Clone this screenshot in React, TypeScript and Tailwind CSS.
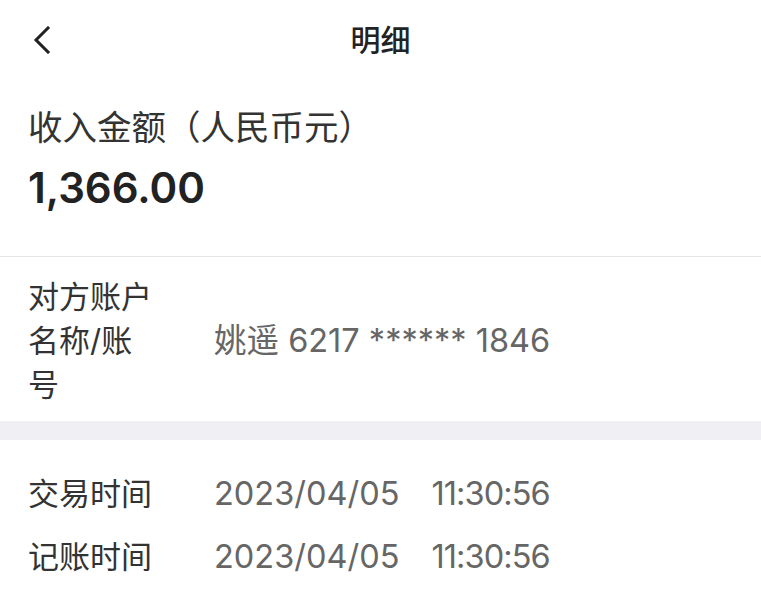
const font = { fontFamily: "Inter, 'Noto Sans CJK SC', sans-serif" };

function BackIcon() {
  return (
    <svg width="20" height="28" viewBox="0 0 20 28" fill="none">
      <path d="M16 2 L4 14 L16 26" stroke="#222" strokeWidth="3" strokeLinecap="square" />
    </svg>
  );
}

export default function App() {
  return (
    <div className="min-h-screen w-full bg-white font-['Inter','Noto_Sans_CJK_SC',sans-serif]" style={font}>
      <header className="relative flex h-[80px] items-center justify-center">
        <button className="absolute left-[32px] top-[26px]">
          <BackIcon />
        </button>
        <h1 className="text-[30px] font-medium text-[#222]">明细</h1>
      </header>

      <section className="border-b border-[#e6e6e6] px-[28px] pb-[40px] pt-[24px]">
        <p className="text-[34.5px] leading-[48px] text-[#333]">收入金额（人民币元）</p>
        <p className="mt-[8px] text-[42px] font-semibold leading-[56px] text-[#222]">1,366.00</p>
      </section>

      <section className="flex items-center px-[28px] pb-[14px] pt-[18px]">
        <div className="w-[186px] shrink-0">
          <p className="w-[128px] text-[31px] leading-[44px] text-[#333]">对方账户名称/账号</p>
        </div>
        <p className="text-[32.5px] leading-[44px] text-[#666]">姚遥 6217 ****** 1846</p>
      </section>

      <div className="h-[19px] bg-[#efeff4]" />

      <section className="px-[28px] pt-[23px]">
        {["交易时间", "记账时间"].map((label) => (
          <div key={label} className="flex h-[63px] items-center">
            <span className="w-[186px] shrink-0 text-[31px] text-[#333]">{label}</span>
            <span className="text-[32.5px] text-[#666]">2023/04/05</span>
            <span className="ml-[32px] text-[32.5px] tracking-[-0.9px] text-[#666]">11:30:56</span>
          </div>
        ))}
      </section>
    </div>
  );
}
